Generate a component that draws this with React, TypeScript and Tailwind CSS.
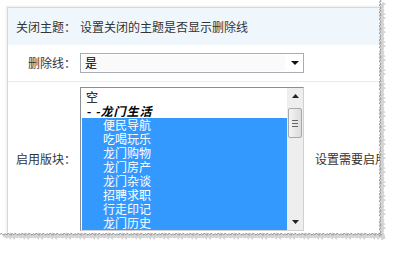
import React from "react";

const groupItems: string[] = [
  "便民导航",
  "吃喝玩乐",
  "龙门购物",
  "龙门房产",
  "龙门杂谈",
  "招聘求职",
  "行走印记",
  "龙门历史",
];

// jagged "torn paper" edge offsets, 1px steps
const jag = (len: number, seed: number) => {
  const pts: number[] = [];
  for (let i = 0; i <= len; i += 1) {
    pts.push(((i * 37 + seed * 11) % 7) / 3.5 + (i % 2) * 0.6);
  }
  return pts;
};

const TornEdges: React.FC = () => {
  const right = jag(236, 1);
  const bottom = jag(382, 3);
  const rightPts = right.map((v, i) => `${379 + v},${i}`).join(" ");
  const bottomPts = bottom.map((v, i) => `${i},${233 + v}`).join(" ");
  return (
    <svg className="absolute left-0 top-0 pointer-events-none" width="395" height="253">
      {/* shadow */}
      <polyline points={right.map((v, i) => `${381 + v},${i + 3}`).join(" ")} fill="none" stroke="#d4d4d4" strokeWidth="3" />
      <polyline points={bottom.map((v, i) => `${i + 3},${235 + v}`).join(" ")} fill="none" stroke="#d4d4d4" strokeWidth="3" />
      <polyline points={rightPts} fill="none" stroke="#9a9a9a" strokeWidth="1" />
      <polyline points={bottomPts} fill="none" stroke="#9a9a9a" strokeWidth="1" />
    </svg>
  );
};

const ScrollBar: React.FC = () => (
  <div className="w-[16px] h-full bg-[#eeeeee] flex flex-col items-center">
    <div className="h-[16px] w-full flex items-center justify-center">
      <svg width="7" height="4"><polygon points="0,4 7,4 3.5,0" fill="#222" /></svg>
    </div>
    <div className="mt-[4px] w-[14px] h-[30px] rounded-[2px] border border-[#a8a8a8] bg-gradient-to-r from-[#f4f4f4] to-[#dcdcdc] flex flex-col items-center justify-center gap-[2px]">
      <div className="w-[6px] h-px bg-[#666]" />
      <div className="w-[6px] h-px bg-[#666]" />
      <div className="w-[6px] h-px bg-[#666]" />
    </div>
    <div className="flex-1" />
    <div className="h-[16px] w-full flex items-center justify-center">
      <svg width="7" height="4"><polygon points="0,0 7,0 3.5,4" fill="#222" /></svg>
    </div>
  </div>
);

const App: React.FC = () => {
  return (
    <div
      className="relative w-[395px] h-[253px] bg-white overflow-hidden text-[12px] leading-[14px] text-[#333]"
      style={{ fontFamily: '"Noto Sans CJK SC", "Noto Sans", sans-serif' }}
    >
      <div className="pl-[7px] pt-[7px]">
        <div className="relative w-[373px] h-[227px] border-l border-t border-[#d8d8d8] shadow-[-1px_-1px_2px_rgba(0,0,0,0.08)] overflow-hidden">
          {/* Header row */}
          <div className="flex items-center h-[37px] bg-[#f0f7fc]">
            <div className="w-[72px] pr-[4px] text-right shrink-0">关闭主题：</div>
            <div className="whitespace-nowrap">设置关闭的主题是否显示删除线</div>
          </div>

          {/* Strikethrough row */}
          <div className="flex items-center h-[37px] border-b border-[#ebebeb]">
            <div className="w-[72px] pr-[4px] text-right shrink-0">删除线：</div>
            <div className="relative w-[224px] h-[20px] border border-[#a9acb2] bg-white flex items-center">
              <div className="absolute left-[1px] top-[1px] bottom-[1px] w-[203px] bg-[#fafafa]" />
              <span className="relative pl-[4px] text-black">是</span>
              <div className="absolute right-[4px] top-0 bottom-0 flex items-center">
                <svg width="8" height="4"><polygon points="0,0 8,0 4,4" fill="#111" /></svg>
              </div>
            </div>
          </div>

          {/* Board row */}
          <div className="flex items-start pt-[5px]">
            <div className="w-[72px] pr-[4px] text-right shrink-0 self-center">启用版块：</div>
            <div className="flex w-[224px] h-[144px] border border-[#8b8e94] border-r-[#d0d0d0] border-b-[#d0d0d0] bg-white shrink-0">
              <div className="flex-1 pt-[2px] pl-[1px] overflow-hidden text-black">
                <div className="pl-[4px] h-[14px]">空</div>
                <div className="pl-[4px] h-[14px] font-bold italic tracking-[1px]">- -龙门生活</div>
                <div className="bg-[#3399ff] text-white">
                  {groupItems.map((name) => (
                    <div key={name} className="pl-[21px] h-[14px]">
                      {name}
                    </div>
                  ))}
                </div>
              </div>
              <ScrollBar />
            </div>
            <div className="pl-[11px] self-center whitespace-nowrap">设置需要启用的版块</div>
          </div>
        </div>
      </div>
      <TornEdges />
    </div>
  );
};

export default App;
